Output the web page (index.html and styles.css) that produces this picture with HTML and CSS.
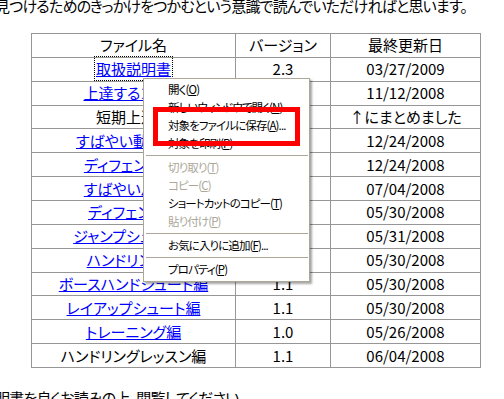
FILE: index.html
```html
<!DOCTYPE html>
<html lang="ja">
<head>
<meta charset="utf-8">
<title>ファイル一覧</title>
<link rel="stylesheet" href="styles.css">
</head>
<body>
<p class="para intro">見つけるためのきっかけをつかむという意識で読んでいただければと思います。</p>
<table class="files">
  <tr class="head"><th class="c-name">ファイル名</th><th class="c-ver">バージョン</th><th class="c-date">最終更新日</th></tr>
  <tr><td><a href="#" class="focused">取扱説明書</a></td><td>2.3</td><td>03/27/2009</td></tr>
  <tr><td><a href="#">上達するコツ編</a></td><td>1.0</td><td>11/12/2008</td></tr>
  <tr><td>短期上達編</td><td>-</td><td>↑にまとめました</td></tr>
  <tr><td><a href="#">すばやい動き方編</a></td><td>1.0</td><td>12/24/2008</td></tr>
  <tr><td><a href="#">ディフェンス1編</a></td><td>1.0</td><td>12/24/2008</td></tr>
  <tr><td><a href="#">すばやいパス編</a></td><td>1.1</td><td>07/04/2008</td></tr>
  <tr><td><a href="#">ディフェンス編</a></td><td>1.1</td><td>05/30/2008</td></tr>
  <tr><td><a href="#">ジャンプシュート編</a></td><td>1.0</td><td>05/31/2008</td></tr>
  <tr><td><a href="#">ハンドリング編</a></td><td>1.1</td><td>05/30/2008</td></tr>
  <tr><td><a href="#">ボースハンドシュート編</a></td><td>1.1</td><td>05/30/2008</td></tr>
  <tr><td><a href="#">レイアップシュート編</a></td><td>1.1</td><td>05/30/2008</td></tr>
  <tr><td><a href="#">トレーニング編</a></td><td>1.0</td><td>05/26/2008</td></tr>
  <tr><td>ハンドリングレッスン編</td><td>1.1</td><td>06/04/2008</td></tr>
</table>
<p class="para outro">明書を良くお読みの上、閲覧してください。</p>

<div class="menu">
  <ul class="menu-list">
    <li class="item">開く(<u>O</u>)</li>
    <li class="item">新しいウィンドウで開く(<u>N</u>)</li>
    <li class="item">対象をファイルに保存(<u>A</u>)...</li>
    <li class="item">対象を印刷(<u>P</u>)</li>
    <li class="sep"></li>
    <li class="item off">切り取り(<u>T</u>)</li>
    <li class="item off">コピー(<u>C</u>)</li>
    <li class="item">ショートカットのコピー(<u>T</u>)</li>
    <li class="item off">貼り付け(<u>P</u>)</li>
    <li class="sep"></li>
    <li class="item">お気に入りに追加(<u>F</u>)...</li>
    <li class="sep"></li>
    <li class="item">プロパティ(<u>P</u>)</li>
  </ul>
</div>
<div class="highlight"></div>
</body>
</html>
```
FILE: styles.css
```css
html, body {
  margin: 0;
  padding: 0;
  background: #fff;
  overflow: hidden;
}
body {
  font-family: "Noto Sans CJK JP", "Noto Sans", sans-serif;
  color: #000;
  width: 504px;
  height: 399px;
  position: relative;
}
.para {
  font-size: 15px;
  line-height: 16px;
  letter-spacing: -0.8px;
  margin: 0 0 0 -5px;
  white-space: nowrap;
  font-feature-settings: "palt";
}
.intro {
  margin-top: -2px;
}
.outro {
  margin-top: 22px;
}
.files {
  border-collapse: collapse;
  margin: 19px 0 0 31px;
  width: 450px;
  font-size: 15px;
  font-feature-settings: "palt";
}
.files th, .files td {
  border: 1px solid #969696;
  padding: 0;
  height: 22.86px;
  text-align: center;
  font-weight: normal;
  line-height: 16px;
  white-space: nowrap;
}
.c-name { width: 203px; }
.c-ver { width: 94px; }
.c-date { width: 149px; }
.files a {
  color: #0000ff;
  text-decoration: underline;
}
.files a.focused {
  outline: 1px dotted #000;
  outline-offset: 1px;
}
.menu {
  position: absolute;
  left: 143px;
  top: 78px;
  width: 167px;
  height: 204px;
  box-sizing: border-box;
  background: #fff;
  border: 1px solid #aca899;
  box-shadow: 2px 2px 2px rgba(0, 0, 0, 0.35);
  font-size: 11.5px;
  letter-spacing: -0.9px;
  font-feature-settings: "palt";
}
.menu-list {
  list-style: none;
  margin: 0;
  padding: 1px 1px 3px;
}
.item {
  height: 18px;
  line-height: 18px;
  padding-left: 23px;
  white-space: nowrap;
}
.item.off {
  color: #aca899;
}
.sep {
  height: 6px;
  position: relative;
}
.sep::after {
  content: "";
  position: absolute;
  left: 1px;
  right: 0;
  top: 3px;
  border-top: 1px solid #aca899;
}
.highlight {
  position: absolute;
  left: 153px;
  top: 107px;
  width: 147px;
  height: 39px;
  box-sizing: border-box;
  border: 5px solid #ff0000;
}
```
